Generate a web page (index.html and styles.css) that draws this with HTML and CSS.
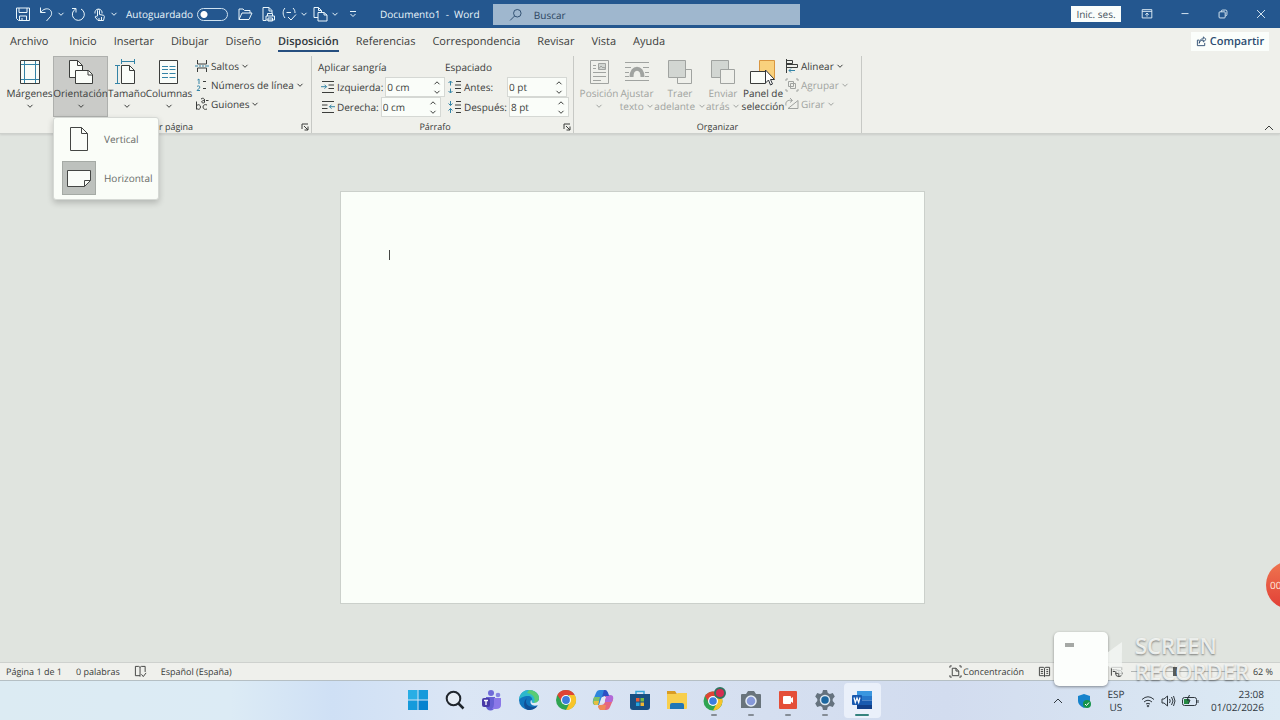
FILE: index.html
```html
<!DOCTYPE html>
<html lang="es">

<head>
    <meta charset="utf-8">
    <title>Documento1 - Word</title>
    <link rel="stylesheet" href="styles.css">
</head>

<body>
    <svg class="defs" aria-hidden="true">
        <symbol id="chev" viewBox="0 0 8 8"><path d="M1.5 2.8 4 5.3l2.5-2.5" /></symbol>
        <symbol id="chev-up" viewBox="0 0 8 8"><path d="M1.5 5.3 4 2.8l2.5 2.5" /></symbol>
        <symbol id="launcher" viewBox="0 0 8 8"><path d="M1 6V1h6M3 3l4 4M7 3.500V7H3.500" /></symbol>
    </svg>

    <header class="titlebar">
        <div class="quick-access">
            <button aria-label="Guardar"><svg class="icon" viewBox="0 0 16 16"><path d="M1.500 2h13v12.500H3.500l-2-2zM4 2v4.500h8V2M4.500 14.500V10h7v4.500M7 12v2.500" /></svg></button>
            <button aria-label="Deshacer"><svg class="icon" viewBox="0 0 16 16"><path d="M2.500 1.500v5h5M2.800 6.300C5 3 9 2 11.500 3.500c3 2 2.500 5.500.5 7.500l-3.500 4" /></svg></button>
            <button aria-label="Más"><svg class="chev"><use href="#chev" /></svg></button>
            <button aria-label="Rehacer"><svg class="icon" viewBox="0 0 16 16"><path d="M2 2.500h4v4M5.700 3A6 6 0 1 0 11 3" /></svg></button>
            <button aria-label="Modo táctil"><svg class="icon" viewBox="0 0 16 16"><path d="M4 7.500a3.600 3.600 0 1 1 7 0M6.500 10V4.500a1 1 0 0 1 2 0v4l4 .8c.8.200 1 1 .8 1.700l-.8 3.500H7l-3-3.500c.5-1.200 1.500-1 2.500 0M8 14.500V12M10.500 14.500V11" /></svg></button>
            <button aria-label="Más"><svg class="chev"><use href="#chev" /></svg></button>
            <label class="autosave">Autoguardado <input type="checkbox" class="toggle"></label>
            <button aria-label="Abrir"><svg class="icon" viewBox="0 0 16 16"><path d="M2 13.500V3h4l1.500 1.500H13V7M2 13.500 5 7h10l-3 6.500z" /></svg></button>
            <button aria-label="Impresión rápida"><svg class="icon" viewBox="0 0 16 16"><path d="M6 14.500H3v-13h6l3 3V7M9 1.500V5h3M7.500 10V7.500h5V10M6 10h8.500v4H6zM8 12h4.500v3H8z" /></svg></button>
            <button aria-label="Ortografía"><svg class="icon" viewBox="0 0 16 16"><path d="M4 2C1.500 4.500 1.500 9 4 12M12 2c1.500 1.500 2 3 2 5M5.500 6.500H10M7 11l3 3 5-5.500" /></svg></button>
            <button aria-label="Más"><svg class="chev"><use href="#chev" /></svg></button>
            <button aria-label="Orientación de página"><svg class="icon" viewBox="0 0 16 16"><path d="M6 11.500H2v-10h4.500l3 3V6M6.500 1.500v3h3M6 6.500h6l3 2.500v6H6zM12 6.500V9h3" /></svg></button>
            <button aria-label="Más"><svg class="chev"><use href="#chev" /></svg></button>
            <button aria-label="Personalizar"><svg class="chev" viewBox="0 0 8 8"><path d="M1 1.500h6M1.500 4 4 6.500 6.500 4" /></svg></button>
            <span class="doc-title">Documento1&nbsp; -&nbsp; Word</span>
        </div>
        <label class="search">
            <svg class="icon" viewBox="0 0 16 16"><circle cx="9.500" cy="6" r="4.300" /><path d="m6.300 9.200-5 5" /></svg>
            <input type="text" placeholder="Buscar" aria-label="Buscar">
        </label>
        <div class="window-controls">
            <button class="signin">Inic. ses.</button>
            <button class="win-btn" aria-label="Opciones de la cinta"><svg class="icon" viewBox="0 0 16 16"><path d="M2.500 3h11v9.500h-11zM2.500 5h11M8 11V7M6 8.800 8 7l2 1.800" /></svg></button>
            <button class="win-btn" aria-label="Minimizar"><svg class="icon" viewBox="0 0 16 16"><path d="M4 7.500h8" /></svg></button>
            <button class="win-btn" aria-label="Restaurar"><svg class="icon" viewBox="0 0 16 16"><rect x="3.500" y="5.500" width="7" height="7" rx="1" /><path d="M6 5.500V5q0-1.500 1.500-1.500H11Q12.500 3.500 12.500 5v3.500Q12.500 10 11 10" /></svg></button>
            <button class="win-btn" aria-label="Cerrar"><svg class="icon" viewBox="0 0 16 16"><path d="m3.500 3.500 9 9M12.500 3.500l-9 9" /></svg></button>
        </div>
    </header>

    <section class="ribbon">
        <nav class="tabs">
            <a href="#" class="file-tab">Archivo</a>
            <a href="#">Inicio</a>
            <a href="#">Insertar</a>
            <a href="#">Dibujar</a>
            <a href="#">Diseño</a>
            <a href="#" class="active">Disposición</a>
            <a href="#">Referencias</a>
            <a href="#">Correspondencia</a>
            <a href="#">Revisar</a>
            <a href="#">Vista</a>
            <a href="#">Ayuda</a>
            <button class="share"><svg class="icon" viewBox="0 0 12 12"><path d="M3.500 4.500H1.500v6h8v-3M3.500 8c.5-2.500 2-3.500 4.500-3.500V6.500L11 3.700 8 1v2C5 3 3.500 5 3.500 8z" /></svg>Compartir</button>
        </nav>

        <div class="groups">
            <div class="group">
                <div class="group-body page-setup">
                    <button class="big">
                        <svg viewBox="0 0 28 28"><path class="paper" d="M4.500 2.500h19v23h-19z" /><path class="blue" d="M8.500 3v22M19.500 3v22M5 6.500h18M5 21.500h18" /></svg>
                        <span>Márgenes</span><svg class="chev"><use href="#chev" /></svg>
                    </button>
                    <div class="menu-anchor">
                        <button class="big open" aria-expanded="true">
                            <svg viewBox="0 0 28 28"><path class="paper" d="M2.500 2.500h8l5 5v12h-13z" /><path d="M10.500 2.500v5h5" /><path class="paper" d="M8.500 12.500h13l4 4v9h-17z" /><path d="M21 12.500v4.500h4.500" /></svg>
                            <span>Orientación</span><svg class="chev"><use href="#chev" /></svg>
                        </button>
                        <div class="menu">
                            <button class="menu-item">
                                <span class="menu-icon"><svg viewBox="0 0 28 28"><path class="paper" d="M5.500 2.500h11l6 6v17h-17z" /><path d="M16.500 2.500v6h6" /></svg></span>Vertical
                            </button>
                            <button class="menu-item">
                                <span class="menu-icon selected"><svg viewBox="0 0 28 28"><path class="paper" d="M2.500 6.500h23v10l-6 6h-17z" /><path d="M19.500 22.500v-6h6" /></svg></span>Horizontal
                            </button>
                        </div>
                    </div>
                    <button class="big">
                        <svg viewBox="0 0 28 28"><path class="blue" d="M8 3.500h14M8.500 1v5M21.500 1v5M4.500 7v19M2 7.500h5M2 25.500h5" /><path class="paper" d="M8.500 7.500h8l5 5v13h-13z" /><path d="M16.500 7.500v5h5" /></svg>
                        <span>Tamaño</span><svg class="chev"><use href="#chev" /></svg>
                    </button>
                    <button class="big">
                        <svg viewBox="0 0 28 28"><path class="paper" d="M4.500 2.500h18v23h-18z" /><path class="blue" d="M7 8.500h6M7 11.500h6M7 15.500h6M7 19.500h6M14.500 8.500h6M14.500 11.500h6M14.500 15.500h6M14.500 19.500h6" /></svg>
                        <span>Columnas</span><svg class="chev"><use href="#chev" /></svg>
                    </button>
                    <div class="small-stack">
                        <button><svg class="icon" viewBox="0 0 14 14"><path d="M2.500 1v4h9V1M2.500 13V9h9v4" /><path class="blue" d="M0 7h3M4 7h2M7 7h2M10 7h4" /></svg>Saltos <svg class="chev"><use href="#chev" /></svg></button>
                        <button><svg class="icon" viewBox="0 0 14 14"><path class="blue" d="m2.500 2 1.500-1v5M2 8.500c2-1.500 3.500 0 2.500 1.500L2 12.500h3" /><path d="M8 3.500h3M8 10.500h3" /></svg>Números de línea <svg class="chev"><use href="#chev" /></svg></button>
                        <button><svg class="icon" viewBox="0 0 14 14"><path d="M1.500 4.500v8M1.500 9.500c0-2.500 4-2.500 4 .5s-4 3-4 .5M12 8c-2-1-4 0-4 2s2 3 4 2M6 2c2-1.500 3.500-.5 3.500 1v2.500c-3 1.500-4.500-2 0-2M11 3.500h2.500" /></svg>Guiones <svg class="chev"><use href="#chev" /></svg></button>
                    </div>
                </div>
                <div class="group-name">Configurar página<button class="launcher" aria-label="Configurar página"><svg><use href="#launcher" /></svg></button></div>
            </div>

            <div class="group">
                <div class="group-body paragraph">
                    <div class="fields">
                        <h3>Aplicar sangría</h3>
                        <div class="field">
                            <svg class="icon" viewBox="0 0 14 14"><path d="M1 1.500h12M7.500 5h5.500M7.500 8.500h5.500M1 12.500h12" /><path class="blue" d="M0 6.700h5.500M3.500 4.700l2 2-2 2" /></svg>
                            <label for="indent-left">Izquierda:</label>
                            <div class="spinner"><input type="text" id="indent-left" value="0 cm"><button aria-label="Aumentar"><svg><use href="#chev-up" /></svg></button><button aria-label="Reducir"><svg><use href="#chev" /></svg></button></div>
                        </div>
                        <div class="field">
                            <svg class="icon" viewBox="0 0 14 14"><path d="M1 1.500h12M1 5h5.500M1 8.500h5.500M1 12.500h12" /><path class="blue" d="M14 6.700H8.500M10.500 4.700l-2 2 2 2" /></svg>
                            <label for="indent-right">Derecha:</label>
                            <div class="spinner"><input type="text" id="indent-right" value="0 cm"><button aria-label="Aumentar"><svg><use href="#chev-up" /></svg></button><button aria-label="Reducir"><svg><use href="#chev" /></svg></button></div>
                        </div>
                    </div>
                    <div class="fields spacing">
                        <h3>Espaciado</h3>
                        <div class="field">
                            <svg class="icon" viewBox="0 0 14 14"><path d="M8 1.500h5M7 5h6M7 8.500h6M8 12.500h5" /><path class="blue" d="M2.500 1v4.500M.5 3l2-2 2 2M2.500 8.500V13M.5 11l2 2 2-2" /></svg>
                            <label for="space-before">Antes:</label>
                            <div class="spinner"><input type="text" id="space-before" value="0 pt"><button aria-label="Aumentar"><svg><use href="#chev-up" /></svg></button><button aria-label="Reducir"><svg><use href="#chev" /></svg></button></div>
                        </div>
                        <div class="field">
                            <svg class="icon" viewBox="0 0 14 14"><path d="M8 1.500h5M7 5h6M7 8.500h6M8 12.500h5" /><path class="blue" d="M2.500 1v4.500M.5 3.500l2 2 2-2M2.500 8.500V13M.5 10.500l2-2 2 2" /></svg>
                            <label for="space-after">Después:</label>
                            <div class="spinner"><input type="text" id="space-after" value="8 pt"><button aria-label="Aumentar"><svg><use href="#chev-up" /></svg></button><button aria-label="Reducir"><svg><use href="#chev" /></svg></button></div>
                        </div>
                    </div>
                </div>
                <div class="group-name">Párrafo<button class="launcher" aria-label="Párrafo"><svg><use href="#launcher" /></svg></button></div>
            </div>

            <div class="group">
                <div class="group-body arrange">
                    <button class="big" disabled>
                        <svg viewBox="0 0 28 28"><path d="M5.500 2.500h18v23h-18zM8 7.500h3M8 10.500h3M8 14.500h13M8 18.500h13M8 22.500h8" /><path class="fill" d="M13.500 5.500h7v6h-7z" /><path d="m13.500 11 2.500-3 2 2 1-1 1.500 2" /></svg>
                        <span>Posición</span><svg class="chev"><use href="#chev" /></svg>
                    </button>
                    <button class="big" disabled>
                        <svg viewBox="0 0 28 28"><path d="M2 4.500h24M2 9.500h6M20 9.500h6M2 14.500h4M22 14.500h4M2 18.500h4M22 18.500h4M2 22.500h24" /><path class="arch" d="M8.500 19c0-11 11-11 11 0" /></svg>
                        <span>Ajustar<br>texto <svg class="chev"><use href="#chev" /></svg></span>
                    </button>
                    <button class="big" disabled>
                        <svg viewBox="0 0 28 28"><path d="M19.500 11.500h6v14h-14v-6" /><path class="fill" d="M2.500 2.500h17v17h-17z" /></svg>
                        <span>Traer<br>adelante <svg class="chev"><use href="#chev" /></svg></span>
                    </button>
                    <button class="big" disabled>
                        <svg viewBox="0 0 28 28"><path class="fill" d="M2.500 2.500h17v17h-17z" /><path class="paper" d="M11.500 11.500h14v14h-14z" /></svg>
                        <span>Enviar<br>atrás <svg class="chev"><use href="#chev" /></svg></span>
                    </button>
                    <button class="big">
                        <svg viewBox="0 0 28 28"><path class="orange" d="M10.500 2.500h15v18h-15z" /><path class="paper" d="M1.500 13.500h15v12h-15z" /><path class="pointer" d="M16.500 12v13l3-3 2 5 2-1-2-4.500h4z" /></svg>
                        <span>Panel de<br>selección</span>
                    </button>
                    <div class="small-stack">
                        <button><svg class="icon" viewBox="0 0 14 14"><path d="M1.500 0v14M1.500 1.500h6v3h-6M1.500 5.500h11v3h-11" /><path class="blue" d="M10 11.500H4M6 9.500l-2 2 2 2" /></svg>Alinear <svg class="chev"><use href="#chev" /></svg></button>
                        <button disabled><svg class="icon" viewBox="0 0 14 14"><path d="M3.500 3.500h5v5h-5zM5.500 5.500h5v5h-5zM1 3V1h2M11 1h2v2M13 11v2h-2M3 13H1v-2" /></svg>Agrupar <svg class="chev"><use href="#chev" /></svg></button>
                        <button disabled><svg class="icon" viewBox="0 0 14 14"><path d="M3 11.500h10v-8zM1 8.500c-1-4 2-6 6-5M5 1l2.500 2.500L5 5.500" /></svg>Girar <svg class="chev"><use href="#chev" /></svg></button>
                    </div>
                </div>
                <div class="group-name">Organizar</div>
            </div>
            <button class="collapse" aria-label="Contraer la cinta"><svg viewBox="0 0 10 10"><path d="m1 7 4-4 4 4" /></svg></button>
        </div>
    </section>

    <main class="workspace">
        <article class="page"><span class="caret"></span></article>
    </main>

    <footer class="statusbar">
        <span>Página 1 de 1</span>
        <span>0 palabras</span>
        <button aria-label="Revisión"><svg class="icon" viewBox="0 0 14 14"><path d="M6.500 12.500v-1h-5v-10h3.500l1.500 1 1.500-1h4v6M6.500 2.500v9M8 10l2 2.500 3-4" /></svg></button>
        <button>Español (España)</button>
        <div class="status-right">
            <button class="focus-btn"><svg class="icon" viewBox="0 0 14 14"><path d="M3.500 3.500h4l3 3v5h-7zM7.500 3.500v3h3M1 3V1h2M11 1h2v2M13 11v2h-2M3 13H1v-2" /></svg>Concentración</button>
            <button class="read-btn" aria-label="Modo de lectura"><svg class="icon" viewBox="0 0 14 14"><path d="M1.500 2.500h4.500l1 1 1-1h4.500v9H8l-1 1-1-1H1.500zM7 3.500v9M3 5h2.500M3 7h2.500M3 9h2.500M9 5h2M9 7h2M9 9h2" /></svg></button>
            <button aria-label="Diseño web"><svg class="icon" viewBox="0 0 14 14"><path d="M1.500 11.500v-9h11v3M3 5h5M3 7h3" /><circle cx="9.500" cy="9" r="3.500" /><path d="M6 9h7M9.500 5.500v7" /></svg></button>
            <input type="range" class="zoom" min="0" max="100" value="38" aria-label="Zoom">
            <span>62 %</span>
        </div>
    </footer>

    <div class="taskbar">
        <div class="apps">
            <button aria-label="Inicio"><svg viewBox="0 0 20 20"><path fill="#29aee5" d="M0 0h9.500v9.500H0z" /><path fill="#159adb" d="M10.500 0H20v9.500h-9.500zM0 10.500h9.500V20H0z" /><path fill="#0682cf" d="M10.500 10.500H20V20h-9.500z" /></svg></button>
            <button aria-label="Buscar"><svg viewBox="0 0 20 20"><circle cx="8.500" cy="8.500" r="6.800" fill="#e6edf5" stroke="#20262d" stroke-width="2" /><path d="m13.500 13.500 5 5" stroke="#20262d" stroke-width="2.500" /></svg></button>
            <button aria-label="Teams"><svg viewBox="0 0 20 20"><circle cx="9" cy="3" r="3" fill="#6f6bd8" /><circle cx="16" cy="5" r="2.300" fill="#8584e2" /><path d="M4 7h9v9a4 4 0 0 1-9 0z" fill="#6660d4" /><path d="M12 8h7v7q0 4-5 4h-4q2-2 2-5z" fill="#8b78e8" /><rect x="0" y="8" width="8" height="9" rx="2" fill="#493aa8" /><path d="M2 10.500h4M4 10.500V15" stroke="#fff" stroke-width="1.300" /></svg></button>
            <button aria-label="Edge"><svg viewBox="0 0 20 20"><circle cx="10" cy="10" r="10" fill="#1175bd" /><path d="M0 9C1 3 5 0 10 0c6 0 10 4 10 8 0 3-2 5-5 5-2 0-3-1-2-2 1-3-1-5-4-5C5 6 1 8 0 10z" fill="#2cb8cc" /><path d="M10 0c6 0 10 4 10 8 0 3-2 5-5 5 2-5-1-9-7-10z" fill="#59cc74" /><path d="M8 8c-3 5 1 9 6 9 2 0 4-1 5-2-2 4-6 5-9 5-5 0-7-8-2-12z" fill="#124f96" /><path d="M13 11c-1 1 0 2 2 2 2 0 4-1 5-3v4l-1 1c-5 2-9-1-7-5z" fill="#e2ebf6" /></svg></button>
            <button aria-label="Chrome"><svg viewBox="0 0 20 20"><circle cx="10" cy="10" r="10" fill="#2fa452" /><path d="M1.300 5A10 10 0 0 1 18.700 5H10L6 12z" fill="#df4434" /><path d="M18.700 5A10 10 0 0 1 10 20l4-8-1-7z" fill="#f8c42a" /><circle cx="10" cy="10" r="5" fill="#fff" /><circle cx="10" cy="10" r="3.900" fill="#3d7ddd" /></svg></button>
            <button aria-label="Copilot"><svg viewBox="0 0 20 20"><path d="M7 0h5q2 0 3 3l1 3h-4Q9 6 8 9l-2 6H3q-4 0-3-5L3 3q1-3 4-3z" fill="#2e86dc" /><path d="M1 7h6l-2 8H3q-4 0-3-4z" fill="#7dc069" /><path d="M1 11h5l-1 4H3q-3 0-2-4z" fill="#e5be43" /><path d="M12 6h5q4 0 3 4l-3 7q-1 3-4 3H8q-2 0-3-4l3-1q3 0 4-3z" fill="#e56780" /><path d="M6 15h7l-1 5H8q-2 0-3-4z" fill="#ef8b57" /><path d="M13 5h4q4 0 3 4l-1 3h-7z" fill="#b269d8" /><path d="M11 0h1q2 0 3 3l1 3h-4q-2 0-3 1z" fill="#2c50c4" /><path d="M9 7h4l-2 6H7z" fill="#e2ebf6" /></svg></button>
            <button aria-label="Microsoft Store"><svg viewBox="0 0 20 20"><path d="M6 5V1.500h8V5" fill="none" stroke="#35a6db" stroke-width="1.500" /><path d="M0 4h20v13q0 3-3 3H3q-3 0-3-3z" fill="#174f83" /><path d="M6 8h3.500v3.500H6z" fill="#e65b39" /><path d="M10.500 8H14v3.500h-3.500z" fill="#75b844" /><path d="M6 12.500h3.500V16H6z" fill="#25a5df" /><path d="M10.500 12.500H14V16h-3.500z" fill="#efb632" /></svg></button>
            <button aria-label="Explorador"><svg viewBox="0 0 20 20"><path d="M0 1h8l2 3H0z" fill="#d99c23" /><path d="M0 4h9l2-1h9v15q0 1-1 1H0z" fill="#f8cf4d" /><path d="M3 19v-4q0-2 2-2h10q2 0 2 2v4z" fill="#2176b7" /></svg></button>
            <button class="running" aria-label="Chrome, perfil"><svg viewBox="0 0 20 20"><circle cx="9" cy="11" r="9.500" fill="#2fa452" /><path d="M1 6A9.500 9.500 0 0 1 17 6H9l-4 7z" fill="#df4434" /><path d="M17 6a9.500 9.500 0 0 1-8 14.500l4-7.500-1-7z" fill="#f8c42a" /><circle cx="9" cy="11" r="5" fill="#fff" /><circle cx="9" cy="11" r="3.800" fill="#3d7ddd" /><circle cx="16" cy="3" r="5" fill="#d42d52" stroke="#31735f" stroke-width="2" /></svg></button>
            <button class="running" aria-label="Cámara"><svg viewBox="0 0 20 20"><path d="M0 5q0-1 1-1h4l2-3h6l2 3h4q1 0 1 1v13H0z" fill="#69747c" /><circle cx="10" cy="11" r="5" fill="#8799d9" stroke="#e5edf6" stroke-width="1.500" /></svg></button>
            <button class="running" aria-label="Grabador"><svg viewBox="0 0 20 20"><rect x="1" y="1" width="18" height="18" rx="1" fill="#e44e38" /><rect x="5" y="6" width="8" height="8" rx="1" fill="#fff" /><path d="m12 9 3-2v6l-3-2z" fill="#fff" /></svg></button>
            <button class="running" aria-label="Configuración"><svg viewBox="0 0 20 20"><path d="M8 0h4l.8 3 2 1 3-1 2 3.500L17.700 9v2l2.100 2.500-2 3.500-3-1-2 1-.8 3H8l-.8-3-2-1-3 1-2-3.500L2.300 11V9L.2 6.500l2-3.500 3 1 2-1z" fill="#65727e" /><circle cx="10" cy="10" r="4.500" fill="#1c67a0" stroke="#dce7f0" stroke-width="1.500" /></svg></button>
            <button class="running current" aria-label="Word"><svg viewBox="0 0 20 20"><path d="M5 1h15v5H5z" fill="#3a96df" /><path d="M5 6h15v4.500H5z" fill="#2878cb" /><path d="M5 10.500h15V15H5z" fill="#195bb0" /><path d="M5 15h15v4H5z" fill="#123f89" /><rect x="0" y="5" width="10" height="10" rx="1" fill="#1859b0" /><path d="m2 7.500 1.300 5L5 8l1.700 4.500L8 7.500" fill="none" stroke="#fff" stroke-width="1.200" /></svg></button>
        </div>
        <div class="tray">
            <button aria-label="Iconos ocultos"><svg viewBox="0 0 14 14"><path d="m3 9 4-4 4 4" /></svg></button>
            <button class="shield" aria-label="Seguridad"><svg viewBox="0 0 14 14"><path d="m7 0 6 2v5q0 4-6 7-6-3-6-7V2z" fill="#1683cc" stroke="none" /><circle cx="10" cy="10" r="4" fill="#169449" stroke="none" /><path d="m8 10 1.500 1.500L12 8.500" stroke="#fff" /></svg></button>
            <button class="lang">ESP<br>US</button>
            <button aria-label="Wi-Fi"><svg viewBox="0 0 14 14"><path d="M1 5.500q6-5.500 12 0M3 8q4-3.500 8 0M5 10q2-1.500 4 0" /><circle cx="7" cy="12" r=".8" /></svg></button>
            <button aria-label="Volumen"><svg viewBox="0 0 14 14"><path d="M1 5h2l3.500-3v10L3 9H1zM8.500 5q1.500 2 0 4M10.500 3q3 4 0 8M12.500 2q3 5 0 10" /></svg></button>
            <button aria-label="Batería"><svg viewBox="0 0 18 14"><rect x="1.500" y="3.500" width="14" height="8" rx="2" /><path d="M17 6v3" /><path d="M3 5h5v5H3z" fill="#268a43" stroke="none" /><path d="M8.500 1 6 6h3L7.500 9.500" stroke="#1f2a30" /></svg></button>
            <button class="clock">23:08<br>01/02/2026</button>
        </div>
    </div>

    <div class="rec-timer">00</div>
    <div class="watermark">
        <div class="rec-box"><span></span></div>
        <div class="rec-lens"></div>
        <div class="rec-name">SCREEN<br>RECORDER</div>
    </div>
</body>

</html>
```

FILE: styles.css
```css
* {
    box-sizing: border-box;
}

body {
    margin: 0;
    min-height: 100vh;
    display: flex;
    flex-direction: column;
    font-family: "Open Sans", "Noto Sans", sans-serif;
    font-size: 10px;
    line-height: 14px;
    text-rendering: geometricPrecision;
    color: #3b3d3b;
    background: #e0e4df;
    overflow: hidden;
    position: relative;
}

button,
input {
    font: inherit;
    color: inherit;
    text-rendering: inherit;
    background: none;
    border: none;
    padding: 0;
    margin: 0;
}

button {
    display: flex;
    align-items: center;
    justify-content: center;
    white-space: nowrap;
}

svg {
    display: block;
    flex: none;
    fill: none;
    stroke: currentColor;
}

.defs {
    position: absolute;
    width: 0;
    height: 0;
}

.icon {
    width: 14px;
    height: 14px;
}

.chev {
    width: 8px;
    height: 8px;
}

/* title bar */

.titlebar {
    height: 28px;
    display: grid;
    grid-template-columns: 38.5% 24% 1fr;
    background: #24578f;
    color: #eaf6fb;
}

.quick-access {
    display: grid;
    grid-template-columns: 24px 21px 10px 23px 19px 12px 114px 22px 24px 18px 12px 20px 10px 26px 1fr;
    align-items: center;
    padding-left: 11px;
}

.quick-access .icon {
    width: 16px;
    height: 16px;
}

.autosave {
    display: flex;
    align-items: center;
    justify-content: space-between;
    padding: 0 6px;
}

.toggle {
    appearance: none;
    width: 31px;
    height: 13px;
    flex: none;
    border: 1px solid #cfe2f0;
    border-radius: 7px;
    background: radial-gradient(circle at 6px 50%, #ffffff 3px, transparent 4px);
}

.doc-title {
    padding-left: 14px;
    white-space: nowrap;
}

.search {
    display: flex;
    align-items: center;
    gap: 11px;
    margin: 4px 0 3px;
    padding-left: 16px;
    background: #9fb7ce;
    color: #234466;
}

.search input {
    flex: 1;
    min-width: 0;
}

.search input::placeholder {
    color: #2c4661;
    opacity: 1;
}

.window-controls {
    display: flex;
    align-items: center;
    justify-content: flex-end;
}

.win-btn {
    width: 38px;
    height: 28px;
}

.signin {
    width: 50px;
    height: 16px;
    margin-right: 7px;
    background: #f9fdfb;
    color: #45525c;
}

/* ribbon */

.ribbon {
    background: #eff0eb;
    border-bottom: 1px solid #cdd0cc;
    box-shadow: 0 1px 2px rgba(0, 0, 0, 0.1);
    position: relative;
    z-index: 1;
}

.tabs {
    height: 26px;
    display: flex;
    gap: 17px;
    align-items: flex-start;
    padding: 0 11px 0 10px;
    font-size: 11px;
}

.tabs a {
    color: inherit;
    text-decoration: none;
    line-height: 17px;
    border-bottom: 2px solid transparent;
    padding-top: 5px;
}

.tabs .file-tab {
    margin-right: 4px;
}

.tabs a.active {
    font-weight: 600;
    color: #30363c;
    border-color: #264f80;
}

.share {
    margin: 4px 0 0 auto;
    width: 78px;
    height: 19px;
    gap: 3px;
    background: #fbfefb;
    color: #2c4c70;
    font-weight: 600;
}

.share .icon {
    width: 11px;
    height: 11px;
}

.groups {
    display: flex;
    padding-top: 2px;
}

.group {
    border-right: 1px solid #c7c9c5;
}

.group-body {
    display: grid;
    height: 61px;
}

.page-setup {
    grid-template-columns: 47px 55px 38px 46px 119px;
    padding-left: 6px;
}

.paragraph {
    grid-template-columns: 127px 122px;
    padding: 4px 6px 0;
}

.arrange {
    grid-template-columns: 34px 42px 44px 42px 38px 74px;
    padding-left: 8px;
    padding-right: 5px;
}

.group-name {
    height: 12px;
    line-height: 12px;
    margin-top: 4px;
    font-size: 9px;
    text-align: center;
    position: relative;
}

.paragraph + .group-name {
    padding-right: 15px;
}

.launcher {
    position: absolute;
    right: 2px;
    top: 2px;
}

.launcher svg {
    width: 8px;
    height: 8px;
}

.big {
    width: 100%;
    height: 61px;
    flex-direction: column;
    justify-content: flex-start;
    padding-top: 2px;
    line-height: 13px;
}

.big > svg:first-child {
    width: 28px;
    height: 28px;
    margin-bottom: 1px;
}

.big .chev {
    margin-top: 2px;
}

.big span .chev {
    display: inline-block;
    margin: 0;
}

.open {
    background: #cacbc8;
    border: 1px solid #aeb0ad;
    padding-top: 1px;
}

.paper {
    fill: #fafdf9;
}

.blue {
    stroke: #3484a6;
}

.fill {
    fill: #d2d6d2;
}

.orange {
    fill: #f9d17d;
    stroke: #d99640;
}

.arch {
    stroke-width: 4;
}

.pointer {
    fill: #ffffff;
    stroke: #30353a;
}

button:disabled {
    color: #a0a3a0;
}

button:disabled .paper {
    fill: #eff0eb;
}

.small-stack {
    display: flex;
    flex-direction: column;
    align-items: flex-start;
    padding-left: 3px;
}

.small-stack button {
    height: 19px;
    gap: 2px;
}

.menu-anchor {
    position: relative;
}

.menu {
    position: absolute;
    top: 61px;
    left: 0;
    z-index: 2;
    min-width: 105px;
    padding: 1px 6px 2px 8px;
    background: #fafdf8;
    border: 1px solid #d6d9d5;
    border-radius: 3px;
    box-shadow: 0 3px 6px rgba(0, 0, 0, 0.2);
}

.menu-item {
    height: 39px;
    gap: 8px;
    color: #686b68;
}

.menu-icon {
    width: 34px;
    height: 34px;
    display: grid;
    place-items: center;
    color: #444644;
}

.menu-icon.selected {
    background: #bdc1bd;
    border: 1px solid #a5aaa5;
}

.menu-icon svg {
    width: 28px;
    height: 28px;
}

h3 {
    margin: 0;
    font-size: 10px;
    font-weight: normal;
    line-height: 14px;
    height: 17px;
}

.field {
    height: 20px;
    display: flex;
    align-items: center;
    gap: 2px;
    padding-left: 3px;
}

.spacing .spinner {
    margin-left: auto;
}

.spinner {
    flex: none;
    width: 60px;
    height: 20px;
    display: grid;
    grid-template-columns: 1fr 14px;
    background: #fafdf9;
    border: 1px solid #d5d8d4;
}

.spinner input {
    grid-row: span 2;
    width: 100%;
    min-width: 0;
    padding-left: 1px;
}

.spinner svg {
    width: 8px;
    height: 8px;
}

.collapse {
    margin: auto 6px 0 auto;
}

.collapse svg {
    width: 10px;
    height: 10px;
}

/* document */

.workspace {
    flex: 1;
    padding: 57px 15px 0 0;
}

.page {
    width: 46.2%;
    aspect-ratio: 297 / 210;
    margin: 0 auto;
    padding: 58px 48px;
    background: #fafef9;
    border: 1px solid #cbd0cb;
}

.caret {
    display: block;
    width: 1px;
    height: 10px;
    background: #444644;
}

/* status bar */

.statusbar {
    height: 19px;
    display: flex;
    align-items: center;
    gap: 14px;
    padding: 0 7px 0 6px;
    background: #eff0ec;
    border-top: 1px solid #ced1ce;
    border-bottom: 1px solid #b5bfc4;
    font-size: 9px;
}

.statusbar .icon {
    width: 13px;
    height: 13px;
}

.status-right {
    margin-left: auto;
    display: flex;
    align-items: center;
    gap: 8px;
}

.focus-btn {
    gap: 1px;
}

.read-btn {
    margin: 0 51px 0 6px;
}

.zoom {
    appearance: none;
    width: 114px;
    height: 1px;
    background: #b3b6b3;
}

.zoom::-webkit-slider-thumb {
    appearance: none;
    width: 4px;
    height: 9px;
    background: #5b5e5b;
}

/* taskbar */

.taskbar {
    height: 39px;
    display: grid;
    grid-template-columns: 1fr auto 1fr;
    align-items: center;
    background: linear-gradient(90deg, #dcebf3 0%, #dcebf5 18%, #cfe0f5 26%, #dbe6f5 36%, #d5dff0 60%, #d2dcef 74%, #dceaf4 100%);
    color: #30383f;
}

.apps {
    grid-column: 2;
    display: flex;
}

.apps button {
    width: 37px;
    height: 35px;
    flex-direction: column;
    padding-top: 4px;
}

.apps svg {
    width: 20px;
    height: 20px;
    stroke: none;
    overflow: visible;
}

.apps button::after {
    content: "";
    width: 6px;
    height: 2px;
    margin-top: 4px;
    border-radius: 1px;
}

.apps .running::after {
    background: #858d96;
}

.apps .current {
    background: #eaf0fa;
    border-radius: 4px;
}

.apps .current::after {
    width: 14px;
    background: #35837e;
}

.tray {
    display: flex;
    align-items: center;
    justify-content: flex-end;
    gap: 6px;
    padding-right: 16px;
    line-height: 13px;
}

.tray svg {
    height: 14px;
    min-width: 14px;
    overflow: visible;
}

.tray .shield {
    margin-left: 6px;
}

.tray .lang {
    width: 26px;
    margin: 0 6px;
}

.tray .clock {
    text-align: right;
    margin-left: 6px;
}

/* screen recorder overlay */

.rec-timer {
    position: absolute;
    top: 561px;
    right: -34px;
    width: 48px;
    height: 48px;
    line-height: 48px;
    padding-left: 4px;
    border-radius: 50%;
    background: linear-gradient(#ef7650, #e13e36);
    color: #ffe9dd;
    z-index: 3;
}

.watermark {
    position: absolute;
    right: 31px;
    bottom: 34px;
    z-index: 3;
    display: flex;
    align-items: center;
}

.rec-box {
    width: 54px;
    height: 54px;
    padding: 11px;
    background: #fcfefc;
    border-radius: 5px;
    box-shadow: 0 1px 3px rgba(0, 0, 0, 0.4);
}

.rec-box span {
    display: block;
    width: 9px;
    height: 4px;
    background: #a5a8a5;
}

.rec-lens {
    width: 14px;
    height: 34px;
    margin-right: 13px;
    background: rgba(245, 248, 245, 0.75);
    clip-path: polygon(0 30%, 100% 0, 100% 100%, 0 70%);
}

.rec-name {
    font-size: 22px;
    font-weight: 600;
    line-height: 26px;
    color: rgba(250, 252, 250, 0.85);
    text-shadow: 0 1px 2px rgba(0, 0, 0, 0.45);
}
```
